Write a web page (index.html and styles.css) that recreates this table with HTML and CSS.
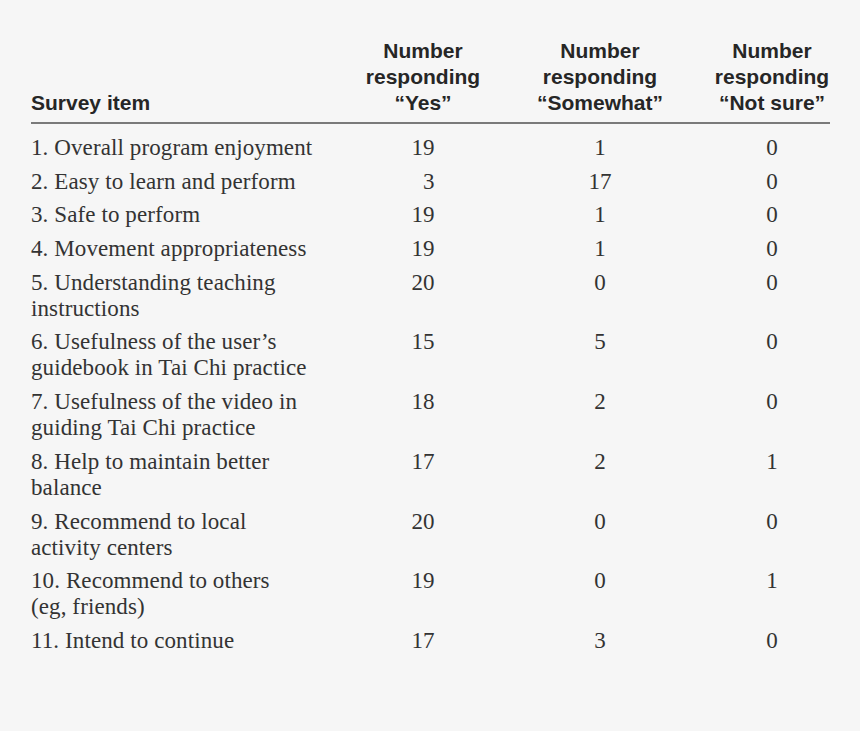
FILE: index.html
```html
<!DOCTYPE html>
<html lang="en">
<head>
<meta charset="utf-8">
<title>Survey table</title>
<link rel="stylesheet" href="styles.css">
</head>
<body>
<table class="survey">
  <colgroup>
    <col class="c-item">
    <col class="c-yes">
    <col class="c-some">
    <col class="c-not">
  </colgroup>
  <thead>
    <tr>
      <th class="h-item">Survey item</th>
      <th>Number<br>responding<br>“Yes”</th>
      <th>Number<br>responding<br>“Somewhat”</th>
      <th>Number<br>responding<br>“Not sure”</th>
    </tr>
  </thead>
  <tbody>
    <tr><td class="item">1. Overall program enjoyment</td><td>19</td><td>1</td><td>0</td></tr>
    <tr><td class="item">2. Easy to learn and perform</td><td>&#8199;3</td><td>17</td><td>0</td></tr>
    <tr><td class="item">3. Safe to perform</td><td>19</td><td>1</td><td>0</td></tr>
    <tr><td class="item">4. Movement appropriateness</td><td>19</td><td>1</td><td>0</td></tr>
    <tr><td class="item">5. Understanding teaching<br>instructions</td><td>20</td><td>0</td><td>0</td></tr>
    <tr><td class="item">6. Usefulness of the user’s<br>guidebook in Tai Chi practice</td><td>15</td><td>5</td><td>0</td></tr>
    <tr><td class="item">7. Usefulness of the video in<br>guiding Tai Chi practice</td><td>18</td><td>2</td><td>0</td></tr>
    <tr><td class="item">8. Help to maintain better<br>balance</td><td>17</td><td>2</td><td>1</td></tr>
    <tr><td class="item">9. Recommend to local<br>activity centers</td><td>20</td><td>0</td><td>0</td></tr>
    <tr><td class="item">10. Recommend to others<br>(eg, friends)</td><td>19</td><td>0</td><td>1</td></tr>
    <tr><td class="item">11. Intend to continue</td><td>17</td><td>3</td><td>0</td></tr>
  </tbody>
</table>
</body>
</html>
```

FILE: styles.css
```css
html, body {
  margin: 0;
  padding: 0;
  background: #f6f6f6;
}

body {
  padding: 38px 0 0 31px;
}

.survey {
  border-collapse: collapse;
  table-layout: fixed;
  width: 799px;
}

.c-item { width: 329px; }
.c-yes { width: 126px; }
.c-some { width: 228px; }
.c-not { width: 116px; }

.survey th {
  font-family: "Liberation Sans", Arial, sans-serif;
  font-weight: bold;
  font-size: 21px;
  line-height: 26px;
  color: #262626;
  text-align: center;
  vertical-align: bottom;
  padding: 0 0 6px 0;
  border-bottom: 2px solid #7a7a7a;
  white-space: nowrap;
}

.survey th.h-item {
  text-align: left;
}

.survey td {
  font-family: "Liberation Serif", "Times New Roman", serif;
  font-size: 23px;
  line-height: 26px;
  letter-spacing: 0.1px;
  color: #333333;
  text-align: center;
  vertical-align: top;
  padding: 4px 0 3.7px 0;
  white-space: nowrap;
}

.survey td.item {
  text-align: left;
}

.survey tbody tr:first-child td {
  padding-top: 11px;
}
```
